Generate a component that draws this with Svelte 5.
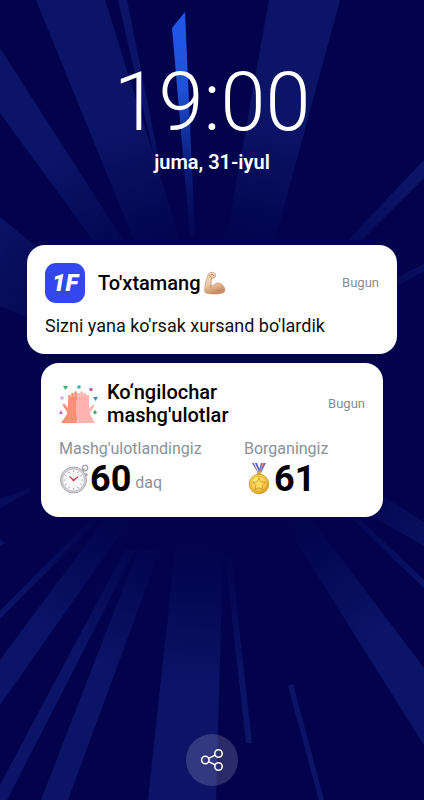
<script lang="ts">
	const rays = [
		"36,0 105,0 180,240 134,240",
		"118,0 127,0 157,150 156,165",
		"0,48 123,240 93,240 0,113",
		"0,217 34,245 34,320 0,306",
		"269,0 340,0 275,240 226,240",
		"424,160 424,178 362,240 348,240",
		"424,264 424,271 390,290 390,281",
		"0,611 90,520 98,520 0,619",
		"0,660 104,520 130,520 0,705",
		"0,785 125,550 135,550 7,800 0,800",
		"41,800 138,550 160,550 68,800",
		"148,800 175,550 223,550 216,800",
		"225,555 231,555 252,743 246,743",
		"288,686 293,684 324,800 319,800",
		"297,543 290,520 312,520 424,668 424,745",
		"350,517 358,517 424,580 424,588",
		"375,491 424,522 424,546 368,514",
		"0,499 30,488 30,492 0,508",
		"0,539 5,543 0,546"
	];

	const confetti = [
		{ d: "M4 3h5l-2.500 4z", fill: "#3fae6a" },
		{ d: "M34 14h5l-2.500 4z", fill: "#2c8fc4" },
		{ d: "M0 31l2-4 2 4z", fill: "#b86bc4" },
		{ d: "M36 27l2 2.500-2 2-2-2z", fill: "#45a866" }
	];

	const ticks = Array.from({ length: 12 }, (_, i) => i * 30);

	function share() {
		if (navigator.share) navigator.share({ text: "19:00 juma, 31-iyul" });
	}
</script>

<main class="screen">
	<svg class="backdrop" viewBox="0 0 424 800" preserveAspectRatio="xMidYMid slice" aria-hidden="true">
		<defs>
			<radialGradient id="ray" gradientUnits="userSpaceOnUse" cx="212" cy="400" r="320">
				<stop offset="0.45" stop-color="#0c1468" stop-opacity="0" />
				<stop offset="0.6" stop-color="#0c1468" stop-opacity="0.25" />
				<stop offset="0.9" stop-color="#0c1468" />
			</radialGradient>
			<linearGradient id="beam" x1="0" y1="0" x2="0" y2="1">
				<stop offset="0" stop-color="#2158e8" />
				<stop offset="0.35" stop-color="#1e50da" />
				<stop offset="1" stop-color="#0a1466" stop-opacity="0.2" />
			</linearGradient>
		</defs>
		{#each rays as points}
			<polygon {points} fill="url(#ray)" />
		{/each}
		<polygon points="185,12 172,28 190,236 195,236" fill="url(#beam)" />
	</svg>

	<header class="clock">
		<time class="time">19:00</time>
		<p class="date">juma, 31-iyul</p>
	</header>

	<section class="notes">
		<article class="card">
			<div class="head">
				<div class="logo">1F</div>
				<h2 class="title wide">
					To'xtamang
					<svg class="arm" viewBox="0 0 22 24" role="img" aria-label="muskul">
						<defs>
							<linearGradient id="skin" x1="0" y1="0" x2="0.3" y2="1">
								<stop offset="0" stop-color="#f6d9bd" />
								<stop offset="0.6" stop-color="#eec7a2" />
								<stop offset="1" stop-color="#c98c65" />
							</linearGradient>
						</defs>
						<path d="M4.500 3C5.500 1.200 8.500.7 10.300 1.800c1.600 1 1.700 3.600.5 4.700-.9.800-2.200.9-3.300.6L7 14.500c1.500.3 2.700-.2 3.700-1.200 1.700-1.700 5-1.700 7.300.3 2.600 2.200 3.700 5.500 2.200 7.400-1.200 1.500-4.500 2-9 2-4.500 0-8.700-.3-10-1.800C-.2 19.500 1.500 9 4.500 3z" fill="url(#skin)" stroke="#c49471" stroke-width="0.700" />
						<path d="M7 14.500c-.6.700-.8 1.500-.7 2.300M12 19c1.600 1 3.800.7 5-.3M6.700 3.600c1.500-.6 2.900-.2 2.900 1M5.300 4.300l2.200 2.800" fill="none" stroke="#b67d58" stroke-width="0.800" stroke-linecap="round" />
					</svg>
				</h2>
				<span class="when">Bugun</span>
			</div>
			<p class="body">Sizni yana ko'rsak xursand bo'lardik</p>
		</article>

		<article class="card inset">
			<div class="head">
				<svg class="hands" viewBox="0 0 40 42" aria-hidden="true">
					{#each confetti as c}
						<path d={c.d} fill={c.fill} />
					{/each}
					<circle cx="20" cy="4" r="1.800" fill="#39aeb8" />
					<circle cx="32" cy="6.500" r="1.800" fill="#d65a9b" />
					<circle cx="3" cy="15" r="1.700" fill="#dba3dd" />
					<g fill="#fb9075" stroke="#fb9075" stroke-linecap="round">
						<path d="M9 20Q9 15 13 14L21 14 19 30 18 40H2L8 31z" stroke="none" />
						<path d="M10.500 18V13M13.500 17v-6M16.600 17V9.500M9 28L5 22" stroke-width="2.600" />
					</g>
					<g fill="#ffb3b0" stroke="#ffb3b0" stroke-linecap="round">
						<path d="M17 19Q17 15 20 14h7q3 1 3 6l1 11 5 9H19L17 30z" stroke="none" />
						<path d="M19.500 19v-8M22.600 17V9.500M25.700 17v-6M28.700 18v-5M30 29l4-6" stroke-width="2.600" />
					</g>
					<path d="M21 12v5M24.100 11v6M27.200 12.500v5" stroke="#f79c96" stroke-width="0.500" />
				</svg>
				<h2 class="title">Ko‘ngilochar mashg'ulotlar</h2>
				<span class="when">Bugun</span>
			</div>
			<dl class="stats">
				<div class="stat">
					<dt>Mashg'ulotlandingiz</dt>
					<dd>
						<svg class="watch" viewBox="0 0 30 30" aria-hidden="true">
							<circle cx="25.500" cy="4" r="2.800" fill="#fafafa" stroke="#a6a6ac" stroke-width="1.300" />
							<path d="M22 8l3-3M26 11l2-1" stroke="#aaaab0" stroke-width="3" />
							<circle cx="14" cy="16" r="13" fill="#d2d2d7" stroke="#a8a8af" stroke-width="1" />
							<circle cx="14" cy="16" r="11" fill="#f8f8fa" stroke="#b9b9c0" stroke-width="0.800" />
							{#each ticks as a}
								<path d="M14 6.500v1.500" stroke="#85858c" stroke-width="0.700" transform="rotate({a} 14 16)" />
							{/each}
							<path d="M10 12.500l4 3.700 4.500-3.500" fill="none" stroke="#c93b46" stroke-width="1.100" />
							<circle cx="14" cy="16" r="1.200" fill="#c93b46" />
						</svg>
						<strong>60</strong>
						<span class="unit">daq</span>
					</dd>
				</div>
				<div class="stat">
					<dt>Borganingiz</dt>
					<dd>
						<svg class="medal" viewBox="0 0 30 32" aria-hidden="true">
							<defs>
								<radialGradient id="gold" cx="0.4" cy="0.35" r="0.7">
									<stop offset="0" stop-color="#fff08a" />
									<stop offset="0.6" stop-color="#f5cf41" />
									<stop offset="1" stop-color="#d99c22" />
								</radialGradient>
							</defs>
							<path d="M8 0h5l4 10h-3z" fill="#5a62b5" />
							<path d="M9.500 0h1.500l4.500 10h-1z" fill="#f3dfe6" />
							<path d="M17 0h5l-5 10h-3z" fill="#6c6fba" />
							<path d="M18.500 0h1.500l-4 10h-1z" fill="#e88995" />
							<rect x="13" y="8.500" width="4" height="3.500" rx="1" fill="#dcae43" />
							<circle cx="15" cy="21" r="9.800" fill="url(#gold)" stroke="#c98f25" stroke-width="0.800" />
							<circle cx="15" cy="21" r="7.800" fill="none" stroke="#dda932" stroke-width="0.700" />
							<path d="M15 14.800l1.900 4 4.400.6-3.200 3 .8 4.400-3.900-2.100-3.900 2.100.8-4.400-3.200-3 4.400-.6z" fill="#fbdc5c" stroke="#c88a21" stroke-width="0.800" />
						</svg>
						<strong>61</strong>
					</dd>
				</div>
			</dl>
		</article>
	</section>

	<button class="share" onclick={share} aria-label="Ulashish">
		<svg viewBox="0 0 24 24" fill="none" stroke="#fff" stroke-width="1.600" aria-hidden="true">
			<circle cx="5.300" cy="12" r="3.700" />
			<circle cx="18.500" cy="5.500" r="3.700" />
			<circle cx="18.500" cy="18.500" r="3.700" />
			<path d="M8.600 10.400l6.600-3.300M8.600 13.600l6.600 3.300" />
		</svg>
	</button>
</main>

<style>
	:global(body) { background: #02034c; }
	.screen { position: relative; box-sizing: border-box; min-height: 100vh; padding: 60px 27px 14px; display: flex; flex-direction: column; align-items: center; overflow: hidden; background: #02034c; color: #000; font-family: Roboto, "Liberation Sans", sans-serif; }
	.backdrop { position: absolute; inset: 0; width: 100%; height: 100%; }
	.clock, .notes, .share { position: relative; }
	.clock { text-align: center; color: #fff; }
	.time { display: block; font-size: 81px; font-weight: 300; line-height: 86px; }
	.date { margin: 4px 0 0; font-size: 20px; font-weight: 600; line-height: 24px; }
	.notes { width: 100%; margin-top: 71px; display: flex; flex-direction: column; gap: 9px; }
	.card { padding: 18px; border-radius: 18px; background: #fff; }
	.inset { margin: 0 14px; }
	.head { display: flex; align-items: center; gap: 8px; }
	.logo { width: 40px; height: 40px; flex-shrink: 0; border-radius: 11px; background: #3447ee; color: #fff; font-size: 24px; font-weight: 900; font-style: italic; line-height: 40px; text-align: center; }
	.title { flex: 1; margin: 0; font-size: 20px; font-weight: 500; line-height: 23px; }
	.wide { display: flex; align-items: center; gap: 3px; margin-left: 5px; }
	.arm { width: 22px; height: 24px; }
	.hands { width: 40px; height: 42px; flex-shrink: 0; }
	.when { font-size: 13px; line-height: 16px; color: #868e96; }
	.body { margin: 13px 0 0; font-size: 18px; line-height: 20px; color: #111; }
	.stats { margin: 12px 0 0; display: grid; grid-template-columns: 185px 1fr; }
	dt { font-size: 16px; line-height: 20px; color: #8a929a; }
	dd { margin: 0; display: flex; align-items: center; height: 40px; }
	.watch { width: 31px; height: 30px; }
	.medal { width: 30px; height: 32px; }
	strong { font-size: 36px; font-weight: 700; line-height: 38px; }
	.unit { margin: 8px 0 0 4px; font-size: 16px; line-height: 20px; color: #8a929a; }
	.share { width: 52px; height: 52px; margin-top: auto; padding: 0; display: flex; align-items: center; justify-content: center; border: 0; border-radius: 50%; background: rgba(255, 255, 255, 0.16); cursor: pointer; }
	.share svg { width: 24px; height: 24px; }
</style>
